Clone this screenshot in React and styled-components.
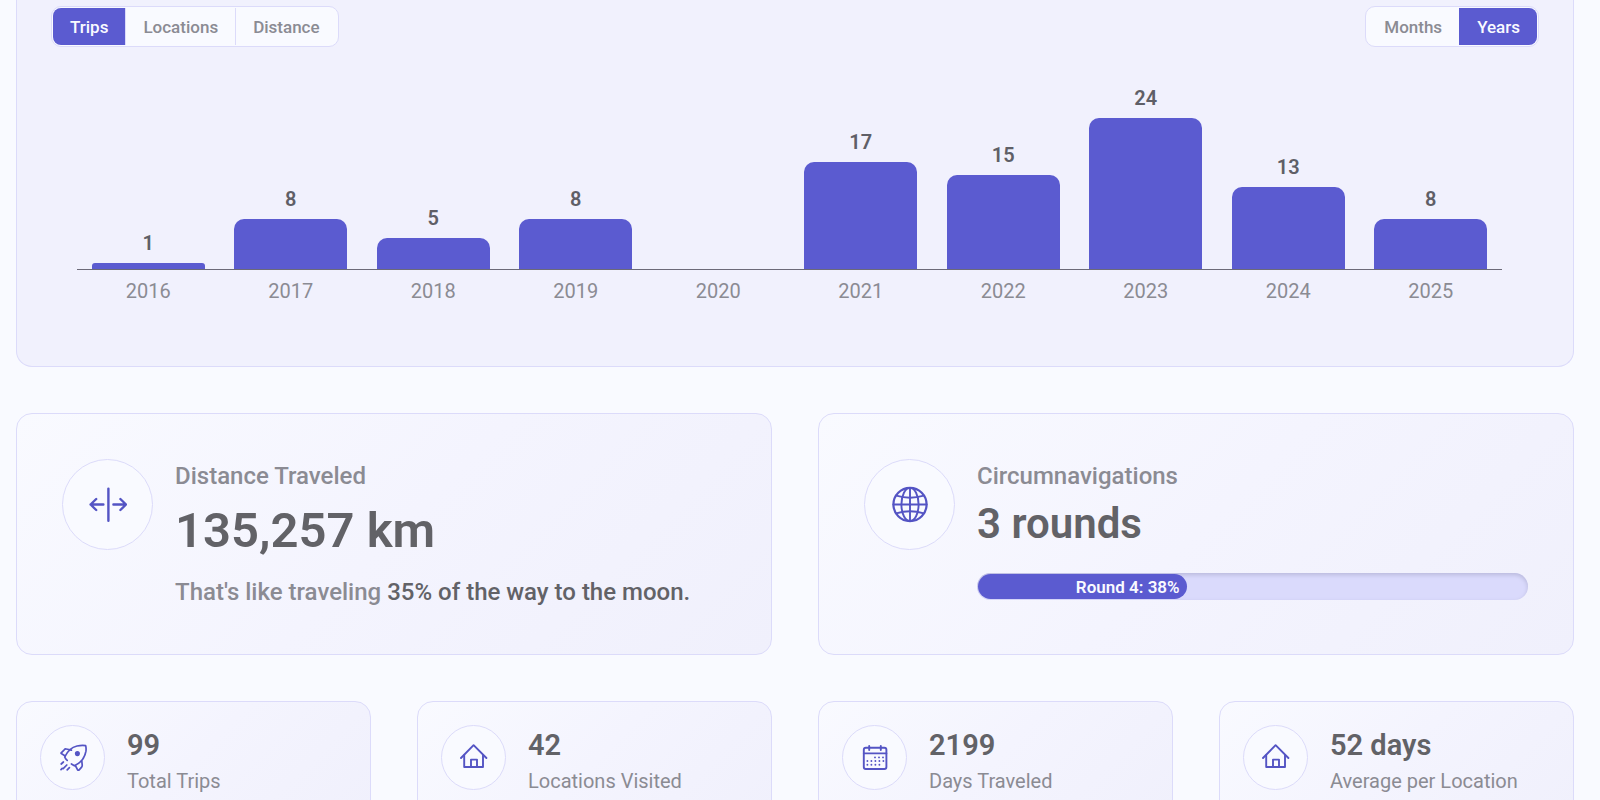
import React, { useState } from 'react'
import styled, { createGlobalStyle } from 'styled-components'

const chartData = [
  { label: '2016', value: 1 },
  { label: '2017', value: 8 },
  { label: '2018', value: 5 },
  { label: '2019', value: 8 },
  { label: '2020', value: 0 },
  { label: '2021', value: 17 },
  { label: '2022', value: 15 },
  { label: '2023', value: 24 },
  { label: '2024', value: 13 },
  { label: '2025', value: 8 },
]

const RocketIcon = () => (
  <svg width="28" height="28" viewBox="0 0 28 28" strokeWidth="1.7">
    <path d="M8.2 16.4 C7 15.4 6.2 14.4 5.7 13 C8 8 12 3.4 18 2 Q23 0.9 26.6 1.6 Q27.4 4 26.9 7.4 C25.8 13.6 21.4 19 15.4 21.8 L12.4 20" />
    <path d="M12.4 6.2 L7.2 5 Q6 4.8 5.2 5.8 L2 9.2 L6.2 12" />
    <path d="M16.6 22 L18.6 25.8 Q19.4 26.6 20.2 25.8 L22.6 23.2 Q23.4 22.2 23.2 20.8 L22.8 17" />
    <path d="M2.2 20 L4.4 18 M2 25.6 L3.2 24.4 M4.2 24.6 L7.8 21 M8.2 25.8 L10.4 23.6" />
    <circle cx="18.4" cy="9.6" r="1.7" fill="currentColor" />
  </svg>
)

const HomeIcon = () => (
  <svg width="28" height="28" viewBox="0 0 28 28" strokeWidth="1.9">
    <path d="M1 14 L13.6 1.2 L26.4 14" />
    <path d="M4.2 11.2 V23 H23 V11.2" />
    <path d="M11 23 V15.6 H17 V23" />
  </svg>
)

const CalendarIcon = () => (
  <svg width="28" height="28" viewBox="0 0 28 28" strokeWidth="1.9">
    <rect x="2.8" y="3.8" width="22.6" height="21.2" rx="2" />
    <path d="M2.8 9.4 H25.4 M8.2 2 V6 M19.8 2 V6" />
    <path
      strokeDasharray="0 4"
      d="M14 13.4 H22.4 M6.4 17 H22.6 M6.4 20.8 H18.6"
    />
  </svg>
)

const GlobeIcon = () => (
  <svg width="38" height="38" viewBox="0 0 38 38" strokeWidth="1.9">
    <circle cx="19" cy="18.5" r="16.6" strokeWidth="2.2" />
    <ellipse cx="19" cy="18.5" rx="8.6" ry="16.6" />
    <path d="M19 2 V35 M2.4 18.5 H35.6" />
    <path d="M5.2 9.6 Q19 13.8 32.8 9.6 M5.2 27.4 Q19 23.2 32.8 27.4" />
  </svg>
)

const DistanceIcon = () => (
  <svg width="38" height="38" viewBox="0 0 38 38" strokeWidth="2.4">
    <path d="M19.4 2.6 V34.8 M14.4 18.5 H1.6 M7.2 13 L1.6 18.5 L7.2 24 M24.4 18.5 H37 M31.4 13 L37 18.5 L31.4 24" />
  </svg>
)

const stats = [
  { icon: <RocketIcon />, value: '99', label: 'Total Trips' },
  { icon: <HomeIcon />, value: '42', label: 'Locations Visited' },
  { icon: <CalendarIcon />, value: '2199', label: 'Days Traveled' },
  { icon: <HomeIcon />, value: '52 days', label: 'Average per Location' },
]

const Toggle = ({ options, value, onChange }) => (
  <ToggleGroup>
    {options.map((option) => (
      <ToggleButton
        key={option}
        type="button"
        $active={option === value}
        aria-pressed={option === value}
        onClick={() => onChange(option)}
      >
        {option}
      </ToggleButton>
    ))}
  </ToggleGroup>
)

const BarChart = ({ data }) => {
  const max = Math.max(...data.map((d) => d.value))

  return (
    <Chart>
      {data.map((d) => {
        const height = Math.round((d.value / max) * 151)
        const radius = Math.min(10, height / 2)
        return (
          <Column key={d.label}>
            <Plot>
              {d.value > 0 && (
                <>
                  <BarValue>{d.value}</BarValue>
                  <Bar style={{ height, borderRadius: `${radius}px ${radius}px 0 0` }} />
                </>
              )}
            </Plot>
            <Year>{d.label}</Year>
          </Column>
        )
      })}
    </Chart>
  )
}

const App = () => {
  const [metric, setMetric] = useState('Trips')
  const [period, setPeriod] = useState('Years')

  return (
    <Page>
      <GlobalStyle />
      <ChartPanel>
        <Toolbar>
          <Toggle options={['Trips', 'Locations', 'Distance']} value={metric} onChange={setMetric} />
          <Toggle options={['Months', 'Years']} value={period} onChange={setPeriod} />
        </Toolbar>
        <BarChart data={chartData} />
      </ChartPanel>

      <CardGrid $columns={2}>
        <Card>
          <IconCircle $size={91}><DistanceIcon /></IconCircle>
          <CardBody>
            <CardTitle>Distance Traveled</CardTitle>
            <BigValue>135,257 km</BigValue>
            <Note>That's like traveling <strong>35% of the way to the moon.</strong></Note>
          </CardBody>
        </Card>
        <Card>
          <IconCircle $size={91}><GlobeIcon /></IconCircle>
          <CardBody>
            <CardTitle>Circumnavigations</CardTitle>
            <RoundsValue>3 rounds</RoundsValue>
            <Track>
              <Fill style={{ width: '38%' }}>Round 4: 38%</Fill>
            </Track>
          </CardBody>
        </Card>
      </CardGrid>

      <CardGrid $columns={4}>
        {stats.map((s) => (
          <StatCard key={s.label}>
            <IconCircle $size={65}>{s.icon}</IconCircle>
            <CardBody>
              <StatValue>{s.value}</StatValue>
              <StatLabel>{s.label}</StatLabel>
            </CardBody>
          </StatCard>
        ))}
      </CardGrid>
    </Page>
  )
}

const GlobalStyle = createGlobalStyle`
  * {
    box-sizing: border-box;
  }
  body {
    margin: 0;
    background: #f9faff;
    color: #626267;
    font-family: Roboto, 'Liberation Sans', sans-serif;
  }
  p {
    margin: 0;
  }
`

const Page = styled.main`
  display: flex;
  flex-direction: column;
  gap: 46px;
  padding: 0 26px 46px 16px;
`

const ChartPanel = styled.section`
  padding: 6px 34px 63px;
  background: #f1f1fd;
  border: 1px solid #dcdbfa;
  border-top: none;
  border-radius: 0 0 16px 16px;
`

const Toolbar = styled.div`
  display: flex;
  justify-content: space-between;
`

const ToggleGroup = styled.div`
  display: flex;
  padding: 1px;
  background: #f9faff;
  border: 1px solid #dcdbfa;
  border-radius: 10px;
`

const ToggleButton = styled.button`
  height: 37px;
  padding: 0 17px;
  border: none;
  border-left: 1px solid ${({ $active }) => ($active ? '#5b5bd0' : '#dcdbfa')};
  background: ${({ $active }) => ($active ? '#5b5bd0' : 'transparent')};
  color: ${({ $active }) => ($active ? '#f9faff' : '#8b8b93')};
  font: 500 17px Roboto, 'Liberation Sans', sans-serif;
  cursor: pointer;

  &:first-child {
    border-left: none;
    border-radius: 8px 0 0 8px;
  }
  &:last-child {
    border-radius: 0 8px 8px 0;
  }
`

const Chart = styled.div`
  display: flex;
  padding: 0 37px 0 26px;
`

const Column = styled.div`
  flex: 1;
  text-align: center;
`

const Plot = styled.div`
  display: flex;
  flex-direction: column;
  align-items: center;
  justify-content: flex-end;
  height: 223px;
  border-bottom: 1px solid #6c6a78;
`

const BarValue = styled.span`
  margin-bottom: 8px;
  color: #5f5f67;
  font-size: 20px;
  font-weight: 600;
  line-height: 24px;
`

const Bar = styled.div`
  width: 79%;
  background: #5b5bd0;
`

const Year = styled.div`
  margin-top: 9px;
  color: #8b8b93;
  font-size: 20px;
  line-height: 24px;
`

const CardGrid = styled.section`
  display: grid;
  grid-template-columns: repeat(${({ $columns }) => $columns}, minmax(0, 1fr));
  gap: 46px;
`

const Card = styled.article`
  display: flex;
  align-items: flex-start;
  gap: 22px;
  padding: 45px;
  border: 1px solid #dcdbfa;
  border-radius: 16px;
  background: linear-gradient(135deg, #f9faff, #f4f4fe 50%, #f0f0fc);
`

const StatCard = styled(Card)`
  padding: 23px;
`

const IconCircle = styled.div`
  display: flex;
  flex: none;
  align-items: center;
  justify-content: center;
  width: ${({ $size }) => $size}px;
  height: ${({ $size }) => $size}px;
  border: 1px solid #dcdbfa;
  border-radius: 50%;
  background: #f9faff;
  color: #5454c4;

  svg {
    fill: none;
    stroke: currentColor;
    stroke-linecap: round;
    stroke-linejoin: round;
  }
`

const CardBody = styled.div`
  flex: 1;
  min-width: 0;
`

const CardTitle = styled.p`
  color: #8b8b93;
  font-size: 24px;
  font-weight: 500;
  line-height: 34px;
`

const BigValue = styled.p`
  margin-top: 8px;
  font-size: 49px;
  font-weight: 600;
  line-height: 60px;
`

const RoundsValue = styled(BigValue)`
  margin-top: 6px;
  font-size: 42px;
  line-height: 50px;
`

const Note = styled.p`
  margin-top: 14px;
  color: #8b8b93;
  font-size: 24px;
  font-weight: 500;
  line-height: 34px;

  strong {
    color: #626267;
    font-weight: 500;
  }
`

const Track = styled.div`
  height: 27px;
  margin-top: 24px;
  padding: 1px;
  border-radius: 14px;
  background: #dadafc;
  box-shadow: inset 0 2px 4px #b9b9dc;
`

const Fill = styled.div`
  display: flex;
  align-items: center;
  justify-content: flex-end;
  height: 100%;
  padding-right: 7px;
  border-radius: 13px;
  background: #5b5bd0;
  color: #f9faff;
  font-size: 17px;
  font-weight: 600;
  white-space: nowrap;
`

const StatValue = styled.p`
  font-size: 29px;
  font-weight: 600;
  line-height: 40px;
`

const StatLabel = styled.p`
  margin-top: 3px;
  color: #8b8b93;
  font-size: 20px;
  line-height: 26px;
`

export default App
